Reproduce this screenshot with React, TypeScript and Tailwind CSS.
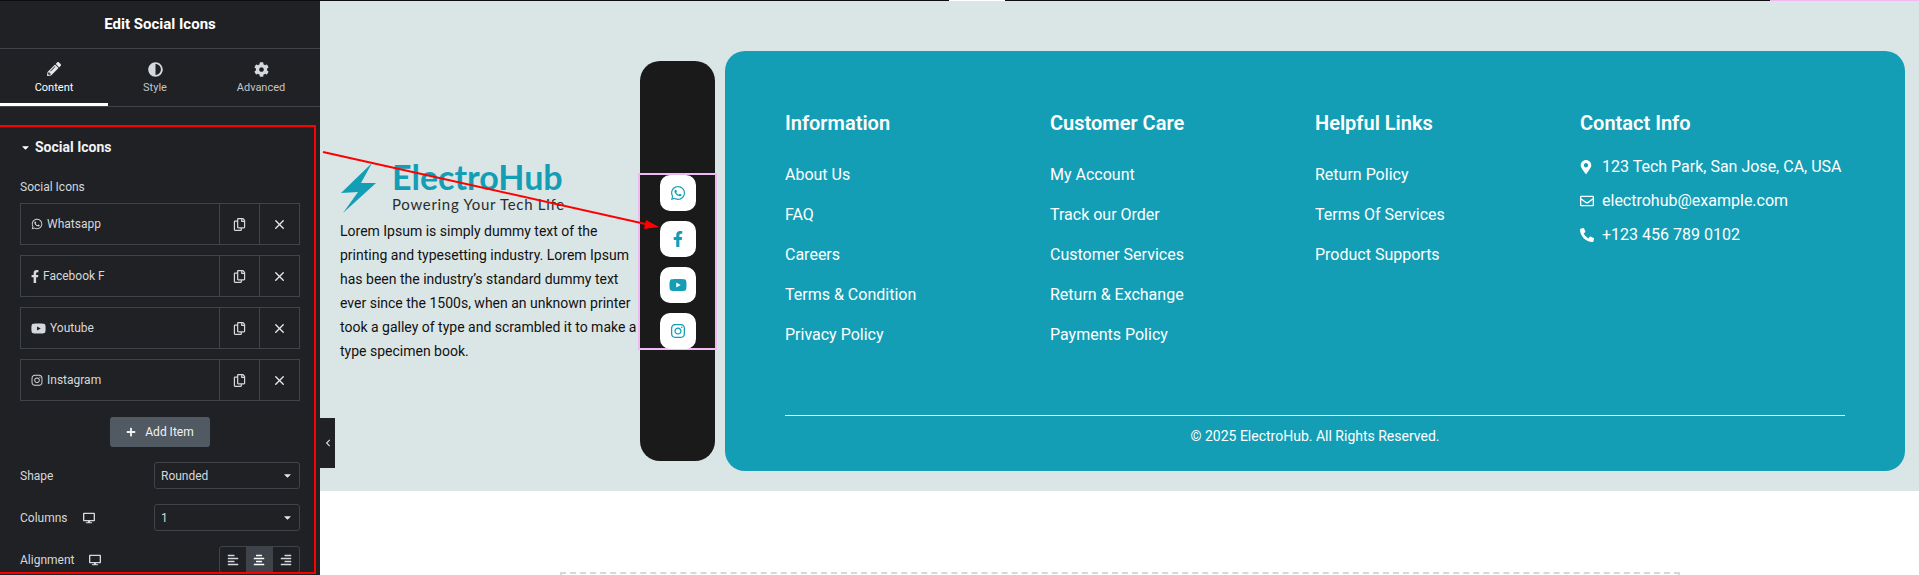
import React from "react";
import {
  FaPencilAlt,
  FaAdjust,
  FaCog,
  FaWhatsapp,
  FaFacebookF,
  FaYoutube,
  FaInstagram,
  FaRegCopy,
  FaPlus,
  FaMapMarkerAlt,
  FaRegEnvelope,
  FaPhoneAlt,
  FaDesktop,
  FaAlignLeft,
  FaAlignCenter,
  FaAlignRight,
  FaCaretDown,
  FaChevronLeft,
} from "react-icons/fa";
import { X } from "lucide-react";

const repeaterItems = [
  { label: "Whatsapp", icon: <FaWhatsapp size={12} />, box: "flex justify-center w-[12px]" },
  { label: "Facebook F", icon: <FaFacebookF size={13} />, box: "flex justify-center w-[8px]" },
  { label: "Youtube", icon: <FaYoutube size={15} />, box: "flex justify-center w-[15px]" },
  { label: "Instagram", icon: <FaInstagram size={12.5} />, box: "flex justify-center w-[12px]" },
];

const footerColumns = [
  { title: "Information", links: ["About Us", "FAQ", "Careers", "Terms & Condition", "Privacy Policy"] },
  { title: "Customer Care", links: ["My Account", "Track our Order", "Customer Services", "Return & Exchange", "Payments Policy"] },
  { title: "Helpful Links", links: ["Return Policy", "Terms Of Services", "Product Supports"] },
];

const contactRows = [
  { text: "123 Tech Park, San Jose, CA, USA", icon: <FaMapMarkerAlt size={14} className="ml-[-1px]" /> },
  { text: "electrohub@example.com", icon: <FaRegEnvelope size={14} /> },
  { text: "+123 456 789 0102", icon: <FaPhoneAlt size={14} /> },
];

const SelectBox = ({ value }: { value: string }) => (
  <div className="flex h-[27px] w-[146px] items-center justify-between rounded-[3px] border border-[#3f444b] pl-[6px] pr-[6px] text-[12px] text-[#d5d8dc]">
    <span>{value}</span>
    <FaCaretDown size={11} className="text-[#e6e8ea]" />
  </div>
);

const Sidebar = () => (
  <aside className="flex h-[575px] w-[320px] shrink-0 flex-col overflow-hidden border-t border-[#0c0d0e] bg-[#1f2124] text-[#d5d8dc]">
    <div className="flex h-[48px] shrink-0 items-center justify-center border-b border-[#3f444b] text-[15px] font-bold text-white">
      Edit Social Icons
    </div>

    {/* Tabs */}
    <div className="flex h-[58px] shrink-0 border-b border-[#3f444b]">
      <div className="flex w-[108px] flex-col items-center border-b-[3px] border-white pt-[13px] text-white">
        <FaPencilAlt size={14} className="text-[#e6e8ea]" />
        <span className="mt-[5px] text-[11px] leading-[13px]">Content</span>
      </div>
      <div className="flex w-[94px] flex-col items-center pt-[13px]">
        <FaAdjust size={15} className="text-[#d5d8dc]" />
        <span className="mt-[4px] text-[11px] leading-[13px] text-[#c2c5c9]">Style</span>
      </div>
      <div className="flex w-[118px] flex-col items-center pt-[13px]">
        <FaCog size={15} className="text-[#d5d8dc]" />
        <span className="mt-[4px] text-[11px] leading-[13px] text-[#c2c5c9]">Advanced</span>
      </div>
    </div>

    <div className="flex flex-col px-[20px] pt-[31px]">
      <div className="flex h-[18px] items-center gap-[4px] text-[14px] font-bold text-[#f1f2f3]">
        <FaCaretDown size={11} className="text-white" />
        Social Icons
      </div>

      <div className="mt-[23px] text-[12px] leading-[16px]">Social Icons</div>

      <div className="mt-[8px] flex flex-col gap-[10px]">
        {repeaterItems.map((item) => (
          <div key={item.label} className="flex h-[42px] border border-[#3f444b] text-[12px]">
            <div className="flex flex-1 items-center gap-[4px] pl-[10px]">
              <span className={item.box}>{item.icon}</span>
              <span>{item.label}</span>
            </div>
            <div className="flex w-[40px] items-center justify-center border-l border-[#3f444b]">
              <FaRegCopy size={13} />
            </div>
            <div className="flex w-[40px] items-center justify-center border-l border-[#3f444b]">
              <X size={15} strokeWidth={2.2} className="text-[#e6e8ea]" />
            </div>
          </div>
        ))}
      </div>

      <div className="mt-[16px] flex justify-center">
        <div className="flex h-[30px] w-[100px] items-center justify-center gap-[9px] rounded-[3px] bg-[#515962] text-[12px] text-[#f1f2f3]">
          <FaPlus size={10} />
          Add Item
        </div>
      </div>

      <div className="mt-[15px] flex items-center justify-between text-[12px]">
        <span>Shape</span>
        <SelectBox value="Rounded" />
      </div>
      <div className="mt-[15px] flex items-center justify-between text-[12px]">
        <span className="flex items-center gap-[15px]">
          Columns <FaDesktop size={12} />
        </span>
        <SelectBox value="1" />
      </div>
      <div className="mt-[15px] flex items-center justify-between text-[12px]">
        <span className="flex items-center gap-[15px]">
          Alignment <FaDesktop size={12} />
        </span>
        <div className="flex h-[27px] w-[81px] overflow-hidden rounded-[3px] border border-[#3f444b]">
          <div className="flex flex-1 items-center justify-center"><FaAlignLeft size={12} /></div>
          <div className="flex flex-1 items-center justify-center bg-[#3f444b] text-white"><FaAlignCenter size={12} /></div>
          <div className="flex flex-1 items-center justify-center"><FaAlignRight size={12} /></div>
        </div>
      </div>
    </div>
  </aside>
);

const Logo = () => (
  <div className="flex h-[59px] items-start">
    <svg width="37" height="51" viewBox="0 0 37 51" className="mt-[3px] shrink-0">
      <polygon points="32,0 1,30 18,29 3,50 36,20 21,20" fill="#139eb6" />
    </svg>
    <div className="ml-[15px] flex flex-col">
      <span className="text-[34px] leading-[34px] font-bold tracking-[0px] text-[#139eb6] [font-family:Lato,sans-serif]">
        ElectroHub
      </span>
      <span className="mt-[1px] text-[15px] leading-[18px] tracking-[0.7px] text-[#2a2d30] [font-family:Lato,sans-serif]">
        Powering Your Tech Life
      </span>
    </div>
  </div>
);

const SocialBar = () => (
  <div className="mt-[10px] flex h-[400px] w-[75px] shrink-0 flex-col items-center justify-center rounded-[20px] bg-[#1a1a1a]">
    <div className="flex h-[177px] w-[79px] shrink-0 flex-col items-center gap-[10px] border-2 border-[#f0b8f4]">
      {[
        <FaWhatsapp size={16} key="w" />,
        <FaFacebookF size={16} key="f" />,
        <FaYoutube size={18} key="y" />,
        <FaInstagram size={16} key="i" />,
      ].map((icon) => (
        <div key={icon.key} className="flex h-[36px] w-[36px] shrink-0 items-center justify-center rounded-[10px] bg-white text-[#139eb6]">
          {icon}
        </div>
      ))}
    </div>
  </div>
);

const FooterCard = () => (
  <div className="ml-[10px] h-[420px] w-[1180px] shrink-0 rounded-[20px] bg-[#139eb6] px-[60px] pt-[60px] text-white">
    <div className="grid h-[304px] grid-cols-[265px_265px_265px_1fr]">
      {footerColumns.map((col) => (
        <div key={col.title}>
          <h3 className="text-[20px] leading-[24px] font-semibold">{col.title}</h3>
          <ul className="mt-[28px] flex flex-col gap-[16px] text-[16px] leading-[24px]">
            {col.links.map((l) => (
              <li key={l}>{l}</li>
            ))}
          </ul>
        </div>
      ))}
      <div>
        <h3 className="text-[20px] leading-[24px] font-semibold">Contact Info</h3>
        <ul className="mt-[20px] flex flex-col gap-[10px] text-[16px] leading-[24px]">
          {contactRows.map((r) => (
            <li key={r.text} className="flex items-center">
              <span className="flex w-[22px] shrink-0 justify-start">{r.icon}</span>
              {r.text}
            </li>
          ))}
        </ul>
      </div>
    </div>
    <div className="border-t border-white pt-[8px] text-center text-[14px] leading-[24px]">
      © 2025 ElectroHub. All Rights Reserved.
    </div>
  </div>
);

export default function App() {
  return (
    <div className="relative flex h-[575px] w-[1919px] overflow-hidden bg-white [font-family:Roboto,sans-serif]">
      <Sidebar />

      <main className="relative flex-1">
        {/* strip of the page above, barely showing */}
        <div className="flex h-[1px]">
          <div className="w-[629px] bg-[#0c0d0e]" />
          <div className="w-[56px] bg-white" />
          <div className="w-[765px] bg-[#0c0d0e]" />
          <div className="flex-1 bg-[#f0b8f4]" />
        </div>

        <section className="flex h-[490px] bg-[#dae5e6] pl-[20px] pt-[50px]">
          <div className="w-[300px] shrink-0 pt-[109px]">
            <Logo />
            <p className="text-[14px] leading-[24px] text-[#111]">
              Lorem Ipsum is simply dummy text of the printing and typesetting industry. Lorem Ipsum has been the
              industry’s standard dummy text ever since the 1500s, when an unknown printer took a galley of type and
              scrambled it to make a type specimen book.
            </p>
          </div>
          <SocialBar />
          <FooterCard />
        </section>

        <div className="ml-[240px] mt-[81px] h-[100px] w-[1120px] border-2 border-dashed border-[#d5d8dc]" />

        {/* panel collapse handle */}
        <div className="absolute left-0 top-[418px] flex h-[50px] w-[15px] items-center justify-center bg-[#1f2124] text-[#d5d8dc]">
          <FaChevronLeft size={8} />
        </div>
      </main>

      {/* red annotation drawn over the screenshot */}
      <div className="pointer-events-none absolute left-[-4px] top-[125px] h-[449px] w-[320px] border-2 border-[#ff0000]" />
      <svg className="pointer-events-none absolute left-0 top-0" width="1919" height="575">
        <line x1="323" y1="152" x2="650" y2="225" stroke="#ff0000" strokeWidth="2" />
        <polygon points="659,227 646,220 644,229" fill="#ff0000" />
      </svg>
    </div>
  );
}
